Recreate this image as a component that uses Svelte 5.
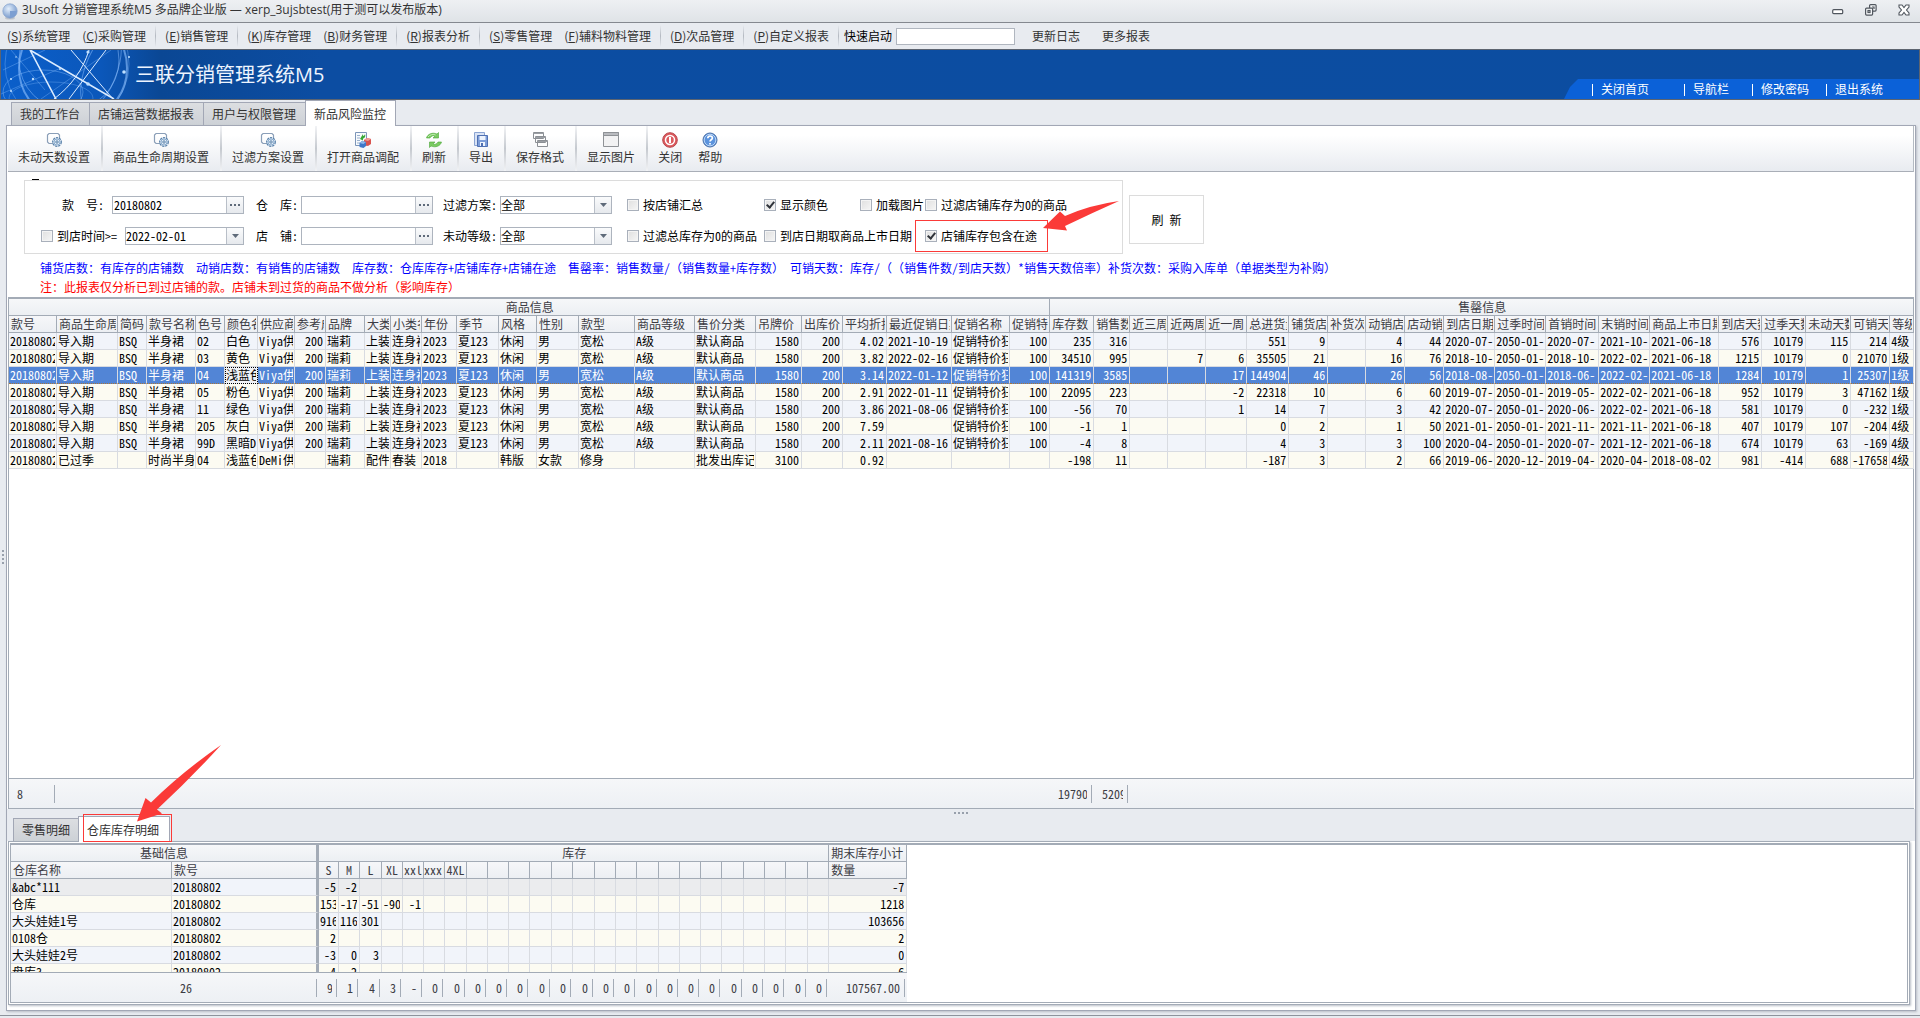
<script>
    const menus = [
        { key: 'S', label: '系统管理' },
        { key: 'C', label: '采购管理', sep: true },
        { key: 'E', label: '销售管理', sep: true },
        { key: 'K', label: '库存管理' },
        { key: 'B', label: '财务管理', sep: true },
        { key: 'R', label: '报表分析', sep: true },
        { key: 'S', label: '零售管理' },
        { key: 'F', label: '辅料物料管理', sep: true },
        { key: 'D', label: '次品管理', sep: true },
        { key: 'P', label: '自定义报表', sep: true }
    ];

    const bannerLinks = [
        { label: '关闭首页', width: 92 },
        { label: '导航栏', width: 68 },
        { label: '修改密码', width: 74 },
        { label: '退出系统', width: 93 }
    ];

    const pageTabs = ['我的工作台', '店铺运营数据报表', '用户与权限管理', '新品风险监控'];
    let activePage = $state(3);

    const tools = [
        { label: '未动天数设置', icon: 'setting' },
        { label: '商品生命周期设置', icon: 'setting' },
        { label: '过滤方案设置', icon: 'setting' },
        { label: '打开商品调配', icon: 'dispatch' },
        { label: '刷新', icon: 'refresh' },
        { label: '导出', icon: 'export' },
        { label: '保存格式', icon: 'layers' },
        { label: '显示图片', icon: 'window' },
        { label: '关闭', icon: 'power', plain: true },
        { label: '帮助', icon: 'help', plain: true }
    ];

    // title, width, numeric
    const columns = [
        ['款号', 48], ['商品生命周期', 61], ['简码', 29], ['款号名称', 49], ['色号', 29],
        ['颜色名称', 33], ['供应商', 37], ['参考成本', 31, true], ['品牌', 39], ['大类', 26],
        ['小类名称', 31], ['年份', 35], ['季节', 42], ['风格', 38], ['性别', 42],
        ['款型', 56], ['商品等级', 60], ['售价分类', 61], ['吊牌价', 46, true], ['出库价', 41, true],
        ['平均折扣', 44, true], ['最近促销日期', 65], ['促销名称', 58], ['促销特价', 40, true], ['库存数', 44, true],
        ['销售数', 36, true], ['近三周', 38, true], ['近两周', 38, true], ['近一周', 41, true], ['总进货量', 42, true],
        ['铺货店数', 39, true], ['补货次数', 38, true], ['动销店数', 39, true], ['店动销率', 39, true], ['到店日期', 51],
        ['过季时间', 51], ['首销时间', 53], ['末销时间', 51], ['商品上市日期', 69], ['到店天数', 43, true],
        ['过季天数', 44, true], ['未动天数', 45, true], ['可销天数', 39, true], ['等级', 24]
    ];
    const groupSplit = 24;

    function product(code, color, rest) {
        return ['20180802', '导入期', 'BSQ', '半身裙', code, color, 'Viya供应商', '200', '瑞莉', '上装', '连身裙',
            '2023', '夏123', '休闲', '男', '宽松', 'A级', '默认商品', '1580', '200', ...rest];
    }

    const rows = [
        product('02', '白色', ['4.02', '2021-10-19', '促销特价狂', '100', '235', '316', '', '', '', '551', '9', '', '4', '44', '2020-07-', '2050-01-', '2020-07-', '2021-10-', '2021-06-18', '576', '10179', '115', '214', '4级']),
        product('03', '黄色', ['3.82', '2022-02-16', '促销特价狂', '100', '34510', '995', '', '7', '6', '35505', '21', '', '16', '76', '2018-10-', '2050-01-', '2018-10-', '2022-02-', '2021-06-18', '1215', '10179', '0', '21070', '1级']),
        product('04', '浅蓝色', ['3.14', '2022-01-12', '促销特价狂', '100', '141319', '3585', '', '', '17', '144904', '46', '', '26', '56', '2018-08-', '2050-01-', '2018-06-', '2022-02-', '2021-06-18', '1284', '10179', '1', '25307', '1级']),
        product('05', '粉色', ['2.91', '2022-01-11', '促销特价狂', '100', '22095', '223', '', '', '-2', '22318', '10', '', '6', '60', '2019-07-', '2050-01-', '2019-05-', '2022-02-', '2021-06-18', '952', '10179', '3', '47162', '1级']),
        product('11', '绿色', ['3.86', '2021-08-06', '促销特价狂', '100', '-56', '70', '', '', '1', '14', '7', '', '3', '42', '2020-07-', '2050-01-', '2020-06-', '2022-02-', '2021-06-18', '581', '10179', '0', '-232', '1级']),
        product('205', '灰白', ['7.59', '', '促销特价狂', '100', '-1', '1', '', '', '', '0', '2', '', '1', '50', '2021-01-', '2050-01-', '2021-11-', '2021-11-', '2021-06-18', '407', '10179', '107', '-204', '4级']),
        product('99D', '黑暗D', ['2.11', '2021-08-16', '促销特价狂', '100', '-4', '8', '', '', '', '4', '3', '', '3', '100', '2020-04-', '2050-01-', '2020-07-', '2021-12-', '2021-06-18', '674', '10179', '63', '-169', '4级']),
        ['20180802', '已过季', '', '时尚半身裙', '04', '浅蓝色', 'DeMi供应商', '', '瑞莉', '配件', '春装', '2018', '', '韩版', '女款', '修身', '', '批发出库记录', '3100', '', '0.92', '', '', '', '-198', '11', '', '', '', '-187', '3', '', '2', '66', '2019-06-', '2020-12-', '2019-04-', '2020-04-', '2018-08-02', '981', '-414', '688', '-17658', '4级']
    ];
    let selected = $state(2);
    const totals = { 0: '8', 24: '197903', 25: '52098' };

    const sizeTitles = ['S', 'M', 'L', 'XL', 'xxl', 'xxxl', '4XL'];
    const sizeWidths = [20, 21, 22, 21, 21, 21, 22, 21, 21, 21, 22, 21, 22, 21, 21, 22, 21, 21, 21, 22, 21, 21, 22, 21];
    const stockWidths = [161, 147, ...sizeWidths, 78];
    const stocks = [
        { name: '&abc*111', sizes: ['-5', '-2'], total: '-7' },
        { name: '仓库', sizes: ['153', '-17', '-51', '-90', '-1'], total: '1218' },
        { name: '大头娃娃1号', sizes: ['916', '116', '301'], total: '103656' },
        { name: '0108仓', sizes: ['2'], total: '2' },
        { name: '大头娃娃2号', sizes: ['-3', '0', '3'], total: '0' },
        { name: '盘库3', sizes: ['-4', '-2'], total: '-6' }
    ];
    const stockTotals = ['9', '1', '4', '3', '-', ...Array(19).fill('0')];
</script>

{#snippet icon(name)}
    <svg class="icon" width="16" height="16" viewBox="0 0 16 16" aria-hidden="true">
        {#if name === 'setting'}
            <path d="M7 11.500H3L1.500 10V3L3 1.500h9L13.500 3v3" fill="none" stroke="#8b9fb8" stroke-width="1.200" />
            <circle cx="11" cy="10" r="4.300" fill="#e4edf6" stroke="#5b83ab" stroke-width="1.300" stroke-dasharray="2.300 .8" />
            <circle cx="11" cy="10" r="3" fill="none" stroke="#8badd0" />
            <circle cx="11" cy="10" r="1.200" fill="#fff" stroke="#4f7ba6" />
        {:else if name === 'dispatch'}
            <path d="M.5.5h11v13H.5z" fill="#f7fafd" stroke="#7c95b8" />
            <path d="M2 3.500h3M2 6h3M2 8.500h3M2 11h3" stroke="#9bb0cc" />
            <path d="M5 7l3-5v2c2-.5 2-2 2-2 1 3-1 4.500-2 4.500v2z" fill="#37a836" />
            <path d="M9 8l3-2 4 1v5l-3 2-4-1z" fill="#d9534f" />
            <path d="M9 8l3-2 4 1-3 2z" fill="#f09a94" />
            <path d="M4.500 11l2.500-2 4 1v4l-2.500 2-4-1z" fill="#3f78c9" />
            <path d="M4.500 11l2.500-2 4 1-2.500 2z" fill="#8fb7ea" />
        {:else if name === 'refresh'}
            <path d="M.5 6C1.500 2 6.500 0 11 2l1.500-1.500V6H7l2-1.800C7 3 5 4 4 6z" fill="#7acb62" stroke="#4aa537" stroke-width=".6" />
            <path d="M15.500 10C14.500 14 9.500 16 5 14l-1.500 1.500V10H9l-2 1.800c2 1.200 4 .2 5-1.800z" fill="#7acb62" stroke="#4aa537" stroke-width=".6" />
            <path d="M2 5C4 2.500 7 2 9.500 3" fill="none" stroke="#c3eeb4" />
        {:else if name === 'export'}
            <path d="M1.500.5h10v13h-10z" fill="#d9e3f5" stroke="#8ba4d2" />
            <path d="M4.500 3.500h10v11h-10z" fill="#7d9dd8" stroke="#4f70b2" />
            <path d="M6.500 4h6v4h-6zM7 10h5v4H7z" fill="#eef4fd" />
            <path d="M8 11h2v3H8z" fill="#4f70b2" />
        {:else if name === 'layers'}
            <path d="M1.500.5h10v6h-10zM3.500 4.500h10v6h-10zM5.500 8.500h10v6h-10z" fill="#fdfdfd" stroke="#8b8f94" />
            <path d="M1.500 1.500h10M3.500 5.500h10M5.500 9.500h10" stroke="#9b9fa4" />
        {:else if name === 'window'}
            <path d="M.5.5h15v14H.5z" fill="#f2f2f3" stroke="#8f9296" />
            <path d="M.5.5h15v3H.5z" fill="#b9bbbf" stroke="#8f9296" />
        {:else if name === 'power'}
            <circle cx="8" cy="8" r="7.300" fill="#dc5a5e" stroke="#b9474c" />
            <circle cx="8" cy="8" r="4.500" fill="none" stroke="#fff" stroke-width="1.500" />
            <path d="M8 5v6" stroke="#fff" stroke-width="2" />
        {:else if name === 'help'}
            <circle cx="8" cy="8" r="7" fill="#5b93dd" stroke="#4a6fa5" />
            <circle cx="8" cy="8" r="5.800" fill="none" stroke="#b8d4f6" />
            <path d="M5.800 6.300c0-3 4.600-3 4.600-.3C10.400 7.700 8 7.800 8 9.500M8 11v1.500" fill="none" stroke="#fff" stroke-width="1.700" />
        {/if}
    </svg>
{/snippet}

{#snippet arrow()}
    <span class="drop"><svg width="7" height="4" viewBox="0 0 7 4" aria-hidden="true"><path d="M0 0h7L3.500 4z" fill="#5f6b7a" /></svg></span>
{/snippet}

{#snippet dots()}
    <svg width="10" height="2" viewBox="0 0 10 2" aria-hidden="true"><path d="M0 0h2v2H0zM4 0h2v2H4zM8 0h2v2H8z" fill="#5f6b7a" /></svg>
{/snippet}

{#snippet check(id, label, checked = false)}
    <input type="checkbox" {id} {checked} />
    <label for={id}>{label}</label>
{/snippet}

<div class="app">
    <header class="titlebar">
        <svg width="16" height="17" viewBox="0 0 16 17" aria-hidden="true">
            <defs>
                <radialGradient id="orb" cx=".4" cy=".35" r=".7">
                    <stop offset="0" stop-color="#e3effc" />
                    <stop offset="1" stop-color="#6f93c8" />
                </radialGradient>
            </defs>
            <ellipse cx="8" cy="15" rx="5" ry="1.500" fill="#c2c6cb" />
            <circle cx="8" cy="8" r="7.200" fill="url(#orb)" stroke="#86a3cf" stroke-width=".7" />
            <path d="M8 8h6.500A7 7 0 0 1 8 14.500z" fill="#7c9fd2" />
        </svg>
        <span class="app-title">3Usoft 分销管理系统M5 多品牌企业版 — xerp_3ujsbtest(用于测可以发布版本)</span>
        <div class="win-buttons">
            <button aria-label="最小化">
                <svg width="12" height="12" viewBox="0 0 12 12"><rect x=".7" y="5.700" width="10" height="4" rx="1" fill="#fff" stroke="#50565e" stroke-width="1.200" /></svg>
            </button>
            <button aria-label="还原">
                <svg width="12" height="12" viewBox="0 0 12 12" fill="#f2f4f6" stroke="#50565e" stroke-width="1.200"><rect x="4.600" y=".6" width="6.500" height="6.500" rx="1" /><path d="M7 3h2v2" fill="none" /><rect x=".6" y="4.100" width="7" height="7" rx="1" /><rect x="3" y="6.500" width="2" height="2" /></svg>
            </button>
            <button aria-label="关闭窗口">
                <svg width="12" height="12" viewBox="0 0 12 12"><path d="M1 1h3l2 2.500L8 1h3v2L8.500 6 11 9v2H8L6 8.500 4 11H1V9l2.500-3L1 3z" fill="#fff" stroke="#50565e" stroke-width="1.100" /></svg>
            </button>
        </div>
    </header>

    <nav class="menubar">
        {#each menus as m}
            <a href="#menu">(<u>{m.key}</u>){m.label}</a>
            {#if m.sep}<i class="sep"></i>{:else}<i class="space"></i>{/if}
        {/each}
        <label for="quick">快速启动</label>
        <input id="quick" class="quick" type="text" />
        <a href="#log" class="extra">更新日志</a>
        <a href="#more" class="extra">更多报表</a>
    </nav>

    <section class="banner">
        <svg class="network" width="134" height="49" viewBox="0 0 134 49" aria-hidden="true">
            <g fill="none" stroke="#8fc2ff">
                <circle cx="68" cy="10" r="50" stroke-opacity=".5" />
                <circle cx="72" cy="18" r="54" stroke-opacity=".6" stroke-width="2" />
                <circle cx="66" cy="14" r="62" stroke-opacity=".35" />
                <ellipse cx="42" cy="42" rx="40" ry="22" stroke-opacity=".4" />
                <ellipse cx="50" cy="48" rx="42" ry="16" stroke-opacity=".3" />
                <ellipse cx="100" cy="20" rx="16" ry="40" stroke-opacity=".5" transform="rotate(20 100 20)" />
                <path d="M2 20L44 0M10 0l34 40M0 44l60-26M40 49l70-49" stroke-opacity=".35" />
            </g>
            <g fill="none" stroke="#dcecff">
                <path d="M29 0l26 49M29 0l84 49" stroke-width="1.600" />
                <path d="M70 0l42 49M88 0C82 20 70 36 53 49M105 0L68 49" />
            </g>
            <g fill="#bfe0ff">
                <circle cx="10" cy="29" r="1" /><circle cx="32" cy="29" r="1.200" /><circle cx="87" cy="2" r="1.600" />
                <circle cx="87" cy="34" r="1.800" /><circle cx="123" cy="22" r="1.800" /><circle cx="128" cy="7" r="1" />
                <circle cx="15" cy="7" r=".8" /><circle cx="10" cy="41" r="1" /><circle cx="59" cy="19" r="1" />
            </g>
        </svg>
        <h1>三联分销管理系统M5</h1>
        <nav class="banner-nav">
            {#each bannerLinks as link}
                <a href="#account" style="width: {link.width}px">{link.label}</a>
            {/each}
        </nav>
    </section>

    <div class="page-tabs">
        {#each pageTabs as tab, i}
            <button class:active={activePage === i} onclick={() => (activePage = i)}>{tab}</button>
        {/each}
    </div>

    <main class="frame">
        <div class="toolbar">
            {#each tools as tool}
                <button class:plain={tool.plain}>
                    {@render icon(tool.icon)}
                    <span>{tool.label}</span>
                </button>
            {/each}
        </div>

        <div class="filter-area">
            <div class="filters">
                <div class="field end">
                    <label for="style-no">款&nbsp; 号:</label>
                    <span class="lookup"><input id="style-no" type="text" value="20180802" /><button aria-label="选择款号">{@render dots()}</button></span>
                </div>
                <div class="field">
                    <label for="warehouse">仓&nbsp; 库:</label>
                    <span class="lookup"><input id="warehouse" type="text" /><button aria-label="选择仓库">{@render dots()}</button></span>
                </div>
                <div class="field">
                    <label for="plan">过滤方案:</label>
                    <span class="combo"><select id="plan"><option>全部</option></select>{@render arrow()}</span>
                </div>
                <div class="tick">{@render check('by-shop', '按店铺汇总')}</div>
                <div class="tick">{@render check('show-color', '显示颜色', true)}</div>
                <div class="tick">{@render check('load-pic', '加载图片')}</div>
                <div class="tick">{@render check('shop-zero', '过滤店铺库存为0的商品')}</div>

                <div class="field end">
                    <span class="tick">{@render check('arrive', '到店时间>=')}</span>
                    <span class="combo date"><select aria-label="到店时间"><option>2022-02-01</option></select>{@render arrow()}</span>
                </div>
                <div class="field">
                    <label for="shop">店&nbsp; 铺:</label>
                    <span class="lookup"><input id="shop" type="text" /><button aria-label="选择店铺">{@render dots()}</button></span>
                </div>
                <div class="field">
                    <label for="level">未动等级:</label>
                    <span class="combo"><select id="level"><option>全部</option></select>{@render arrow()}</span>
                </div>
                <div class="tick">{@render check('total-zero', '过滤总库存为0的商品')}</div>
                <div class="tick wide">{@render check('launch-date', '到店日期取商品上市日期')}</div>
                <div class="tick marked">
                    {@render check('in-transit', '店铺库存包含在途', true)}
                    <i class="mark"></i>
                    <svg class="pointer" width="78" height="32" viewBox="0 0 78 32" aria-hidden="true">
                        <path d="M1 28L18 11.500l5 4.500Q48 5 77 1 50 13 23 26l2 4.500z" fill="#fb3a38" />
                    </svg>
                </div>
            </div>
            <button class="refresh">刷 新</button>
        </div>
        <p class="note blue">铺货店数：有库存的店铺数  动销店数：有销售的店铺数  库存数：仓库库存+店铺库存+店铺在途  售罄率：销售数量/（销售数量+库存数） 可销天数：库存/（（销售件数/到店天数）*销售天数倍率）补货次数：采购入库单（单据类型为补购）</p>
        <p class="note red">注：此报表仅分析已到过店铺的款。店铺未到过货的商品不做分析（影响库存）</p>

        <section class="main-grid">
            <div class="grid-body">
                <table>
                    <colgroup>
                        {#each columns as col}<col style="width: {col[1]}px" />{/each}
                    </colgroup>
                    <thead>
                        <tr class="group">
                            <th colspan={groupSplit}>商品信息</th>
                            <th colspan={columns.length - groupSplit}>售罄信息</th>
                        </tr>
                        <tr>
                            {#each columns as col}<th><div>{col[0]}</div></th>{/each}
                        </tr>
                    </thead>
                    <tbody>
                        {#each rows as row, r}
                            <tr class:selected={selected === r} onclick={() => (selected = r)}>
                                {#each row as cell, c}
                                    <td class:num={columns[c][2]} class:focus={selected === r && c === 5}><div>{cell}</div></td>
                                {/each}
                            </tr>
                        {/each}
                    </tbody>
                </table>
            </div>
            <table class="totals">
                <colgroup>
                    {#each columns as col}<col style="width: {col[1]}px" />{/each}
                </colgroup>
                <tbody>
                    <tr>
                        {#each columns as col, c}
                            <td class:sum={totals[c]}><div>{totals[c] ?? ''}</div></td>
                        {/each}
                    </tr>
                </tbody>
            </table>
        </section>

        <div class="splitter"><i></i><i></i><i></i><i></i></div>

        <div class="detail-tabs">
            <button>零售明细</button>
            <button class="active">
                仓库库存明细
                <i class="mark"></i>
                <svg class="pointer" width="86" height="78" viewBox="0 0 86 78" aria-hidden="true">
                    <path d="M1 77.500L9.500 54l5.500 4.500Q46 28 85 1 55 34 21 65.500l5 4z" fill="#fb3a38" />
                </svg>
            </button>
        </div>

        <section class="detail">
            <div class="detail-inner">
                <div class="stock-body">
                    <table>
                        <colgroup>
                            {#each stockWidths as w}<col style="width: {w}px" />{/each}
                        </colgroup>
                        <thead>
                            <tr class="group">
                                <th colspan="2" class="fixed-edge">基础信息</th>
                                <th colspan={sizeWidths.length}>库存</th>
                                <th class="left"><div>期末库存小计</div></th>
                            </tr>
                            <tr>
                                <th><div>仓库名称</div></th>
                                <th class="fixed-edge"><div>款号</div></th>
                                {#each sizeWidths as _, s}<th class="size"><div>{sizeTitles[s] ?? ''}</div></th>{/each}
                                <th><div>数量</div></th>
                            </tr>
                        </thead>
                        <tbody>
                            {#each stocks as stock, r}
                                <tr class:current={r === 0}>
                                    <td><div>{stock.name}</div></td>
                                    <td class="fixed-edge"><div>20180802</div></td>
                                    {#each sizeWidths as _, s}<td class="num"><div>{stock.sizes[s] ?? ''}</div></td>{/each}
                                    <td class="num"><div>{stock.total}</div></td>
                                </tr>
                            {/each}
                        </tbody>
                    </table>
                </div>
                <table class="totals">
                    <colgroup>
                        {#each stockWidths as w}<col style="width: {w}px" />{/each}
                    </colgroup>
                    <tbody>
                        <tr>
                            <td></td>
                            <td class="sum"><div>26</div></td>
                            {#each stockTotals as t}<td class="sum num"><div>{t}</div></td>{/each}
                            <td class="sum num"><div>107567.00</div></td>
                        </tr>
                    </tbody>
                </table>
            </div>
        </section>
    </main>
    <div class="side-grip"><i></i><i></i><i></i><i></i></div>
    <footer class="statusbar"></footer>
</div>

<style>
    :global(body) {
        background: #e8ebf0;
    }

    .app {
        --line: #a3abb6;
        --ui: "Noto Sans CJK SC", "Open Sans", sans-serif;
        --title: "Open Sans", "Noto Sans CJK SC", sans-serif;
        --song: "Noto Sans Mono CJK SC", "Noto Sans CJK SC", sans-serif;
        position: relative;
        display: flex;
        flex-direction: column;
        min-height: 100vh;
        font: 12px/16px var(--song);
        text-spacing-trim: space-all;
        color: #000;
        background: #e8ebf0;
    }

    .app * {
        box-sizing: border-box;
    }

    button,
    input,
    select {
        font: inherit;
        color: inherit;
        margin: 0;
        padding: 0;
        border: 0;
        background: none;
        border-radius: 0;
        outline: 0;
    }

    a {
        color: inherit;
        text-decoration: none;
    }

    /* Title bar */
    .titlebar {
        display: flex;
        align-items: center;
        gap: 4px;
        height: 23px;
        padding: 0 10px 0 2px;
        border-bottom: 1px solid #84888f;
        background: linear-gradient(#eef0f3, #dfe3e7);
        font-family: var(--title);
        color: #333;
    }

    .app-title {
        padding-bottom: 3px;
    }

    .win-buttons {
        display: flex;
        gap: 21px;
        margin-left: auto;
        padding-bottom: 2px;
    }

    .win-buttons button {
        width: 12px;
        height: 12px;
    }

    .win-buttons svg {
        display: block;
    }

    /* Menu */
    .menubar {
        display: flex;
        align-items: center;
        height: 26px;
        padding-left: 7px;
        font-family: var(--ui);
        color: #333;
        white-space: nowrap;
    }

    .menubar a,
    .menubar label {
        padding-bottom: 1px;
    }

    .menubar label {
        margin-left: -4px;
        color: #000;
    }

    .space {
        width: 12px;
    }

    .sep {
        width: 1px;
        height: 22px;
        margin: 0 9px;
        background: linear-gradient(#e8ebf0, #b4b9c1, #e8ebf0);
    }

    .quick {
        width: 119px;
        height: 17px;
        margin-left: 4px;
        border: 1px solid #b0b6bf;
        background: #fff;
    }

    .extra {
        margin: 0 5px 0 17px;
    }

    /* Banner */
    .banner {
        display: flex;
        height: 51px;
        border: 1px solid #5d6470;
        background: linear-gradient(90deg, #0a5fcb, #0b57ba 100px, #0a4794 160px, #0c4da2 320px, #0c4da0);
    }

    h1 {
        margin: 0;
        font: 20px/49px var(--title);
        color: #eef5ff;
    }

    .banner-nav {
        display: flex;
        align-self: flex-end;
        height: 20px;
        margin-left: auto;
        padding-left: 28px;
        background: #0b61d8;
        clip-path: polygon(14px 0, 100% 0, 100% 100%, 0 100%, 6px 8px);
        color: #fff;
        line-height: 20px;
    }

    .banner-nav a::before {
        content: '';
        display: inline-block;
        width: 1px;
        height: 12px;
        margin-right: 8px;
        background: #fff;
        vertical-align: -2px;
    }

    /* Page tabs */
    .page-tabs {
        display: flex;
        align-items: flex-end;
        height: 25px;
        padding-left: 11px;
        color: #333;
    }

    .page-tabs button,
    .detail-tabs button {
        height: 23px;
        padding: 0 8px;
        border: 1px solid #a2a7b5;
        border-bottom: 0;
        border-right-width: 0;
        background: linear-gradient(#dcdee1, #cdd1d6);
        white-space: nowrap;
    }

    .page-tabs button {
        padding: 0 9px 0 8px;
    }

    .page-tabs .active,
    .detail-tabs .active {
        height: 26px;
        margin-bottom: -1px;
        border-right-width: 1px;
        background: #fff;
        z-index: 1;
    }

    /* Main frame */
    .frame {
        display: flex;
        flex-direction: column;
        flex: 1;
        margin: 0 4px 4px 6px;
        padding: 0 1px 5px;
        border: 1px solid #a2a7b5;
        background: #fff;
        box-shadow: 1px 1px 2px #b9bec6;
    }

    .toolbar {
        display: flex;
        height: 46px;
        border-right: 1px solid #b4bac2;
        border-bottom: 1px solid #a9aeb7;
        background: linear-gradient(#fff 20%, #e8ebf0);
        font-family: var(--ui);
        color: #333;
    }

    .toolbar button {
        display: flex;
        flex-direction: column;
        align-items: center;
        gap: 1px;
        padding: 6px 11px 0 10px;
        border-right: 2px solid;
        border-image: linear-gradient(#f4f5f7, #c5c9cf, #f4f5f7) 1;
    }

    .toolbar .plain {
        padding-right: 6px;
        border: 0;
    }

    .icon {
        display: block;
    }

    /* Filters */
    .filter-area {
        display: flex;
        gap: 6px;
        padding: 8px 0 4px 16px;
    }

    .filters {
        position: relative;
        display: grid;
        grid-template-columns: 217px 187px 184px 137px 96px 65px auto;
        row-gap: 14px;
        width: 1099px;
        height: 74px;
        padding: 15px 14px;
        border: 1px solid #dcdcdc;
    }

    .filters::before {
        content: '';
        position: absolute;
        left: 7px;
        top: -2px;
        width: 7px;
        height: 1px;
        background: #000;
    }

    .field,
    .tick {
        display: flex;
        align-items: center;
        height: 17px;
        white-space: nowrap;
    }

    .field {
        gap: 3px;
    }

    .field.end {
        justify-content: flex-end;
        gap: 8px;
        padding-right: 12px;
    }

    .tick {
        gap: 4px;
    }

    .wide {
        grid-column: span 2;
    }

    input[type='checkbox'] {
        appearance: none;
        width: 12px;
        height: 12px;
        border: 1px solid #a9b0bb;
        background: linear-gradient(135deg, #dfdfdf, #f6f6f6);
        box-shadow: inset 0 0 0 1px #f4f4f4;
    }

    input[type='checkbox']:checked::before {
        content: '';
        display: block;
        width: 3px;
        height: 6px;
        margin: 0 0 0 3px;
        border: solid #30343a;
        border-width: 0 2px 2px 0;
        transform: rotate(40deg);
    }

    .lookup,
    .combo {
        display: grid;
        grid-template-columns: 1fr 17px;
        width: 132px;
        height: 18px;
        border: 1px solid #adb4be;
        background: #fff;
    }

    .combo {
        width: 112px;
    }

    .date {
        width: 119px;
    }

    .lookup input {
        width: 100%;
        height: 16px;
        padding-left: 1px;
    }

    .lookup button,
    .drop {
        display: flex;
        align-items: center;
        justify-content: center;
        border-left: 1px solid #b9bfc8;
        background: linear-gradient(#fafbfc, #e6e9ed);
    }

    .combo select {
        grid-area: 1 / 1 / 2 / 3;
        appearance: none;
        height: 16px;
    }

    .drop {
        grid-area: 1 / 2;
        pointer-events: none;
    }

    .refresh {
        width: 75px;
        height: 49px;
        margin-top: 15px;
        border: 1px solid #dcdcdc;
        background: #fff;
    }

    .note {
        margin: 0;
        padding-left: 32px;
        line-height: 19px;
        white-space: pre;
    }

    .blue {
        color: #00f;
    }

    .red {
        color: #f00;
    }

    /* Annotations over the highlighted controls */
    .marked,
    .detail-tabs .active {
        position: relative;
    }

    .mark {
        position: absolute;
        border: 1px solid #fb3a38;
        pointer-events: none;
    }

    .pointer {
        position: absolute;
        pointer-events: none;
    }

    .marked .mark {
        left: -10px;
        top: -7px;
        width: 133px;
        height: 32px;
    }

    .marked .pointer {
        left: 117px;
        top: -27px;
    }

    /* Tables */
    .main-grid {
        display: flex;
        flex-direction: column;
        flex: 1;
        margin-top: 1px;
        border: 1px solid var(--line);
        border-top-width: 2px;
        background: #fff;
    }

    .grid-body {
        flex: 1;
    }

    table {
        width: 100%;
        table-layout: fixed;
        border-collapse: separate;
        border-spacing: 0;
    }

    th,
    td {
        height: 17px;
        padding: 0 1px;
        border: solid #d8dbe1;
        border-width: 0 1px 1px 0;
        font-weight: 400;
        text-align: left;
    }

    th > div,
    td > div {
        height: 16px;
        overflow: hidden;
        white-space: nowrap;
    }

    th {
        padding-left: 2px;
        border-color: var(--line);
        background: linear-gradient(#f6f7f9, #eceff3);
        color: #3c3c44;
    }

    .group th {
        text-align: center;
    }

    .group .left {
        text-align: left;
    }

    tbody tr:nth-child(odd) {
        background: #f1f4fa;
    }

    tbody tr:nth-child(even) {
        background: #fcfbf2;
    }

    .num {
        padding-right: 2px;
        text-align: right;
    }

    tbody .selected:nth-child(n) {
        background: #5285d6;
        color: #fff;
    }

    .selected td {
        border-bottom: 1px dotted #a8763a;
    }

    .selected td.focus {
        outline: 1px dotted #000;
        outline-offset: -1px;
        background: #f0f2f6;
        color: #000;
    }

    .totals tbody tr:nth-child(n) {
        background: linear-gradient(#f6f7f9, #edf0f4);
    }

    .totals td {
        height: 30px;
        padding: 0 2px 0 0;
        border: 0;
        border-top: 1px solid var(--line);
        color: #3c3c44;
    }

    .totals .sum div {
        height: 18px;
        border: solid transparent;
        border-width: 0 5px 0 8px;
        line-height: 18px;
    }

    .totals .sum {
        background: linear-gradient(var(--line), var(--line)) no-repeat right 2px center / 1px 18px;
    }

    .splitter {
        display: flex;
        justify-content: center;
        gap: 2px;
        height: 7px;
        margin: 0 -1px;
        padding-top: 3px;
        background: #e8ebf0;
    }

    .splitter i,
    .side-grip i {
        width: 2px;
        height: 2px;
        background: #98a0ac;
    }

    .side-grip {
        position: absolute;
        left: 2px;
        top: 550px;
        display: grid;
        gap: 2px;
    }

    .detail-tabs {
        display: flex;
        align-items: flex-end;
        height: 25px;
        margin: 0 -1px;
        padding-left: 6px;
        background: #e8ebf0;
        color: #333;
    }

    .detail-tabs .active {
        padding-right: 10px;
    }

    .detail-tabs .mark {
        left: 4px;
        top: -3px;
        width: 89px;
        height: 28px;
    }

    .detail-tabs .pointer {
        left: 57px;
        top: -73px;
    }

    .detail {
        margin-right: 4px;
        padding: 1px;
        border: 1px solid var(--line);
        box-shadow: 1px 1px 2px #b9bec6;
    }

    .detail-inner {
        border: 1px solid var(--line);
        border-top-width: 2px;
    }

    .detail table {
        width: 895px;
    }

    .stock-body {
        height: 127px;
        overflow: hidden;
    }

    .fixed-edge {
        border-right: 3px solid var(--line);
    }

    .size {
        padding: 0;
        text-align: center;
    }

    .current td:not(.fixed-edge) {
        background: #ebecee;
    }

    .statusbar {
        height: 3px;
        border-top: 1px solid #8d939c;
    }
</style>
